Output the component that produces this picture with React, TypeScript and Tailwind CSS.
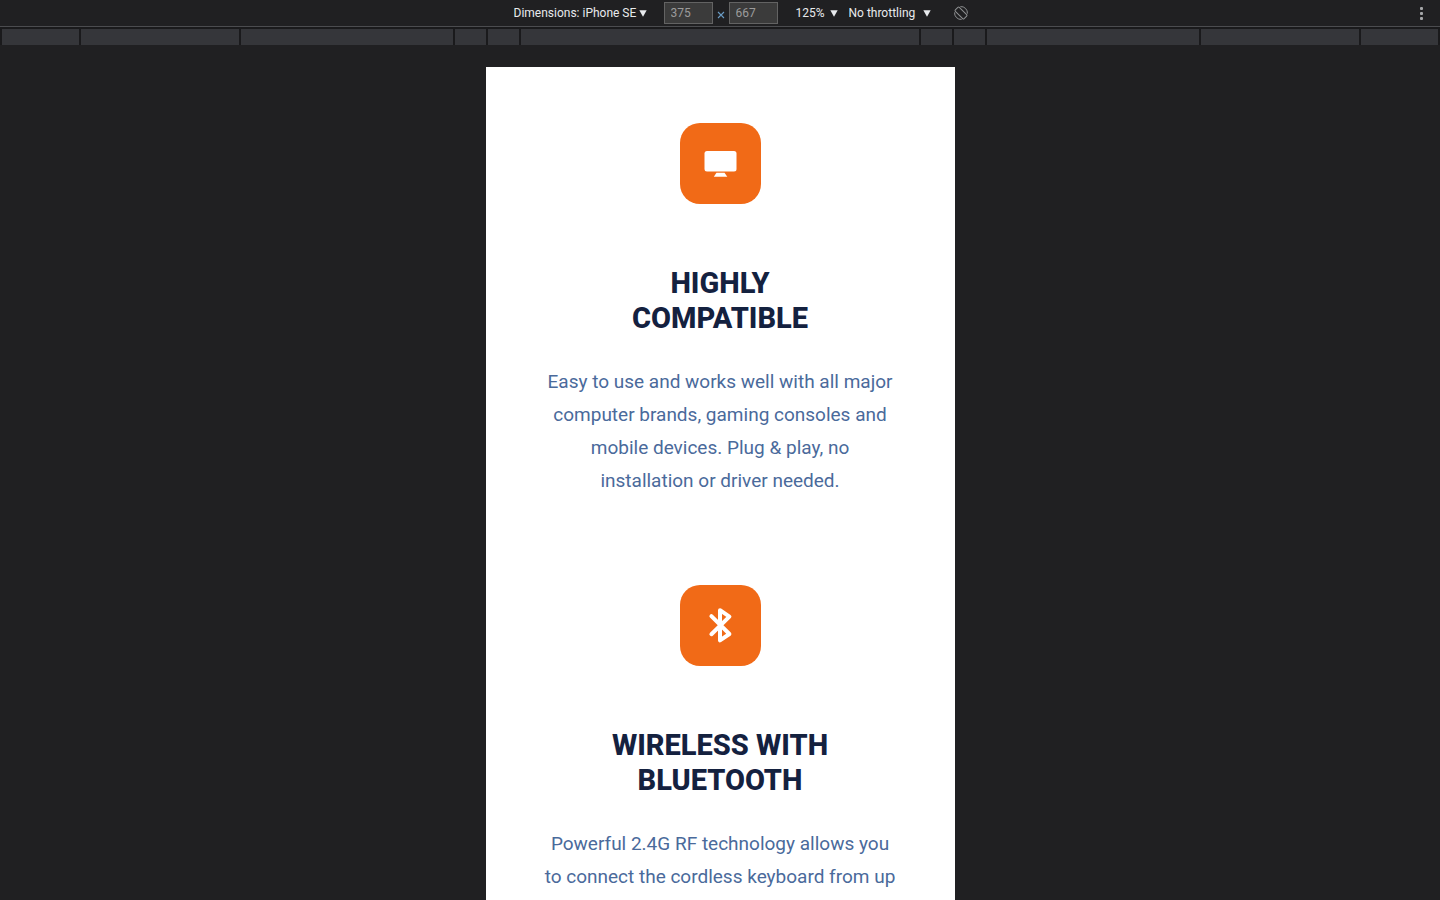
import type { ReactNode } from "react";

function Caret() {
  return (
    <svg viewBox="0 0 8 7" className="pointer-events-none h-[7px] w-2 shrink-0" fill="#e8eaed" aria-hidden="true">
      <path d="M0.3 0.3h7.4L4 6.7z" />
    </svg>
  );
}

function Dropdown({ label, value, width }: { label: string; value: string; width: string }) {
  return (
    <div className="flex items-center">
      <select
        aria-label={label}
        className={`${width} h-6 cursor-pointer appearance-none bg-transparent p-0 text-[12px] text-[#e8eaed] outline-none`}
        defaultValue={value}
      >
        <option>{value}</option>
      </select>
      <Caret />
    </div>
  );
}

function SizeInput({ label, value }: { label: string; value: string }) {
  return (
    <input
      type="text"
      aria-label={label}
      defaultValue={value}
      className="h-[22px] w-[49px] border border-[#636363] bg-[#3b3b3b] px-1.5 text-[12px] text-[#9b9b9b] outline-none"
    />
  );
}

function Toolbar() {
  return (
    <header className="grid h-[27px] shrink-0 grid-cols-[1fr_auto_1fr] items-center border-b border-[#4b4c4f]">
      <div />
      <div className="flex items-center pl-[42px]">
        <Dropdown label="Device" value="Dimensions: iPhone SE" width="w-[125px]" />
        <div className="ml-[17px] flex items-center gap-1">
          <SizeInput label="Width" value="375" />
          <svg viewBox="0 0 8 8" className="mt-1 size-2" stroke="#6a9cc4" strokeWidth="1.1" aria-hidden="true">
            <path d="M1 1l6 6M7 1L1 7" />
          </svg>
          <SizeInput label="Height" value="667" />
        </div>
        <div className="ml-[18px] flex items-center gap-[11px]">
          <Dropdown label="Zoom" value="125%" width="w-[34px]" />
          <Dropdown label="Throttling" value="No throttling" width="w-[74px]" />
        </div>
        <button type="button" aria-label="Rotate" className="ml-[22px] size-4">
          <svg viewBox="0 0 16 16" className="size-4" fill="none" stroke="#8e9092" strokeWidth="1">
            <rect x="5.2" y="1.8" width="5.6" height="12.4" rx="1" transform="rotate(-45 8 8)" />
            <path d="M7.4 1.6A6.4 6.4 0 0 1 14.4 8.6M8.6 14.4A6.4 6.4 0 0 1 1.6 7.4" />
          </svg>
        </button>
      </div>
      <button type="button" aria-label="More options" className="mr-[15px] h-4 w-2 justify-self-end">
        <svg viewBox="0 0 8 16" className="h-4 w-2" fill="#a4a6a8">
          <rect x="3" y="2" width="3" height="3" rx="1" />
          <rect x="3" y="7" width="3" height="3" rx="1" />
          <rect x="3" y="12" width="3" height="3" rx="1" />
        </svg>
      </button>
    </header>
  );
}

const breakpoints = [
  "flex-1",
  "w-[158px]",
  "w-[212px]",
  "w-[31px]",
  "w-[31px]",
  "w-[398px]",
  "w-[31px]",
  "w-[31px]",
  "w-[212px]",
  "w-[158px]",
  "flex-1",
];

function Ruler() {
  return (
    <div className="flex h-[18px] shrink-0 gap-[2px] bg-[#1a1a1c] px-[2px] pt-[2px]">
      {breakpoints.map((size, i) => (
        <div key={i} className={`${size} bg-[#35363a]`} />
      ))}
    </div>
  );
}

function Feature({ icon, title, children }: { icon: ReactNode; title: ReactNode; children: ReactNode }) {
  return (
    <section className="flex flex-col items-center text-center">
      <div className="size-[81px] rounded-[20px] bg-[#f16a17]">{icon}</div>
      <h2 className="mt-[62px] text-[29px] leading-[35px] font-extrabold text-[#14213f] uppercase">{title}</h2>
      <p className="mt-[29px] text-[19px] leading-[33px] whitespace-nowrap text-[#4a6a9b]">{children}</p>
    </section>
  );
}

function MonitorIcon() {
  return (
    <svg viewBox="0 0 81 81" className="size-full" fill="#fff" aria-hidden="true">
      <rect x="24.5" y="28" width="32" height="20.5" rx="2.5" />
      <path d="M36.5 49.8h8l2.8 4H33.8z" />
    </svg>
  );
}

function BluetoothIcon() {
  return (
    <svg
      viewBox="0 0 81 81"
      className="size-full"
      fill="none"
      stroke="#fff"
      strokeWidth="4"
      strokeLinecap="round"
      strokeLinejoin="round"
      aria-hidden="true"
    >
      <path d="M31.4 31.2L49.4 49L40 55.4V25.2L49.4 31.6L31.4 49.2" />
    </svg>
  );
}

export default function App() {
  return (
    <div className="flex h-screen flex-col overflow-hidden bg-[#202022] font-['Roboto','Open_Sans',sans-serif]">
      <Toolbar />
      <Ruler />
      <main className="flex min-h-0 flex-1 justify-center overflow-hidden pt-[22px]">
        <div className="flex w-[469px] max-w-full flex-col gap-[88px] overflow-hidden bg-white pt-14">
          <Feature icon={<MonitorIcon />} title={<>Highly<br />Compatible</>}>
            Easy to use and works well with all major
            <br />
            computer brands, gaming consoles and
            <br />
            mobile devices. Plug &amp; play, no
            <br />
            installation or driver needed.
          </Feature>
          <Feature icon={<BluetoothIcon />} title={<>Wireless with<br />Bluetooth</>}>
            Powerful 2.4G RF technology allows you
            <br />
            to connect the cordless keyboard from up
          </Feature>
        </div>
      </main>
    </div>
  );
}
